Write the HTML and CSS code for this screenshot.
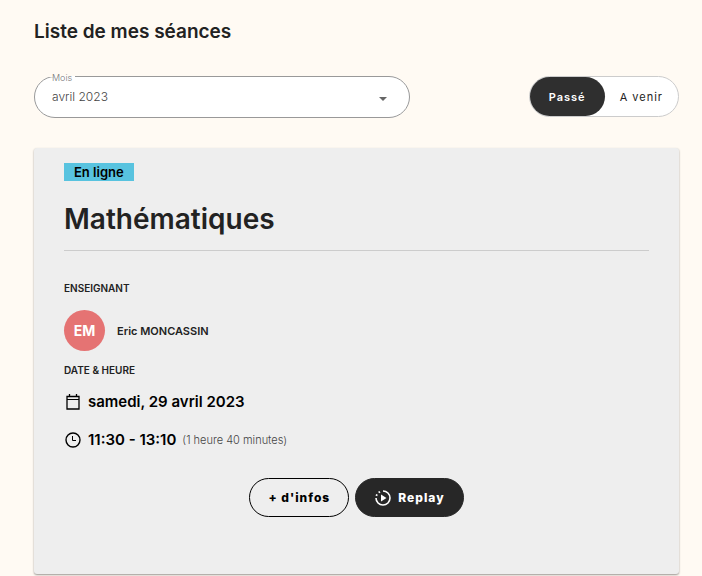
FILE: index.html
```
<!DOCTYPE html>
<html lang="fr">
<head>
    <meta charset="UTF-8">
    <meta name="viewport" content="width=device-width, initial-scale=1.0">
    <title>Liste de mes séances</title>
    <link rel="stylesheet" href="styles.css">
</head>
<body>
    <main>
        <h1>Liste de mes séances</h1>

        <!-- Filtres -->
        <div class="filters">
            <fieldset class="month">
                <legend><label for="month">Mois</label></legend>
                <select id="month">
                    <option>avril 2023</option>
                    <option>mars 2023</option>
                </select>
                <svg class="caret" viewBox="0 0 8 4" aria-hidden="true"><path d="M0 0h8L4 4z"/></svg>
            </fieldset>
            <div class="toggle">
                <button type="button" class="toggle-item active" aria-pressed="true">Passé</button>
                <button type="button" class="toggle-item" aria-pressed="false">A venir</button>
            </div>
        </div>

        <!-- Séance -->
        <article class="card">
            <span class="badge">En ligne</span>
            <h2>Mathématiques</h2>

            <h3>ENSEIGNANT</h3>
            <div class="teacher">
                <span class="avatar">EM</span>
                <span class="teacher-name">Eric MONCASSIN</span>
            </div>

            <h3>DATE &amp; HEURE</h3>
            <div class="info">
                <svg class="icon" viewBox="0 0 18 18" aria-hidden="true">
                    <path d="M3 3.500h12v12.500H3zM5.500 1v2.500M12.500 1v2.500" fill="none" stroke="currentColor" stroke-width="1.300"/>
                    <path d="M3 6.500h12" stroke="currentColor"/>
                </svg>
                <span>samedi, 29 avril 2023</span>
            </div>
            <div class="info">
                <svg class="icon" viewBox="0 0 18 18" aria-hidden="true">
                    <path d="M8.500 5v4.500H12" fill="none" stroke="currentColor"/>
                    <circle cx="9" cy="9" r="7" fill="none" stroke="currentColor" stroke-width="1.400"/>
                </svg>
                <span>11:30 - 13:10</span>
                <span class="duration">(1 heure 40 minutes)</span>
            </div>

            <div class="actions">
                <button type="button" class="button">+ d'infos</button>
                <button type="button" class="button dark">
                    <svg class="icon" viewBox="0 0 18 18" aria-hidden="true">
                        <path d="M9 2a7 7 0 1 1-7 7" fill="none" stroke="currentColor" stroke-width="1.600"/>
                        <path d="M2.300 6.800 3 5.300M4.600 3.600 6 2.700" fill="none" stroke="currentColor" stroke-width="1.800"/>
                        <path d="M7 5.500v7L12.500 9z" fill="currentColor"/>
                    </svg>
                    Replay
                </button>
            </div>
        </article>
    </main>
</body>
</html>
```

FILE: styles.css
```
* {
    box-sizing: border-box;
}

body {
    margin: 0;
    background-color: #fffaf3;
    color: #222;
    font-family: Inter, "Open Sans", sans-serif;
}

main {
    padding: 20px 23px 2px 34px;
}

h1 {
    margin: 0 0 32px;
    font-size: 19px;
    line-height: 24px;
    font-weight: 600;
}

button,
select {
    font-family: inherit;
    cursor: pointer;
}

/* Filtres */
.filters {
    display: grid;
    grid-template-columns: 7fr 5fr;
    align-items: start;
    margin-bottom: 30px;
}

.month {
    position: relative;
    height: 42px;
    min-width: 0;
    margin: 0;
    padding: 0 17px;
    border: 1px solid #999;
    border-radius: 21px;
    background-color: white;
}

.month legend {
    height: 1px;
    margin-left: -3px;
    padding: 0 3px;
    font-size: 9px;
    line-height: 3px;
    font-weight: 300;
    color: #777;
}

.month select {
    width: 100%;
    height: 38px;
    padding: 0;
    border: none;
    background: none;
    appearance: none;
    color: #444;
    font-size: 12px;
    font-weight: 300;
}

.caret {
    position: absolute;
    top: 20px;
    right: 22px;
    width: 8px;
    height: 4px;
    fill: #666;
    pointer-events: none;
}

.toggle {
    display: flex;
    justify-self: end;
    border: 1px solid #ccc;
    border-radius: 21px;
    background-color: white;
}

.toggle-item {
    height: 39px;
    padding: 0 15px;
    border: none;
    border-radius: 20px;
    background: none;
    color: #222;
    font-size: 11px;
    letter-spacing: 1px;
}

.toggle-item.active {
    padding: 0 19px;
    background-color: #2f2f2f;
    color: white;
    font-weight: 600;
}

/* Carte de la séance */
.card {
    padding: 15px 30px 57px;
    border-radius: 3px;
    background-color: #eee;
    box-shadow: 0 1px 2px rgba(0, 0, 0, 0.4);
}

.badge {
    display: block;
    width: fit-content;
    padding: 0 10px;
    background-color: #58c3df;
    color: black;
    font-size: 13px;
    line-height: 18px;
    font-weight: 600;
}

h2 {
    margin: 20px 0 31px;
    padding-bottom: 13px;
    border-bottom: 1px solid #ccc;
    font-size: 28px;
    line-height: 36px;
    font-weight: 600;
}

h3 {
    margin: 0;
    font-size: 10px;
    line-height: 12px;
    font-weight: 600;
}

.teacher {
    display: flex;
    align-items: center;
    gap: 12px;
    margin: 16px 0 13px;
}

.avatar {
    width: 41px;
    height: 41px;
    border-radius: 50%;
    background-color: #e57373;
    color: white;
    font-size: 14px;
    line-height: 41px;
    font-weight: 700;
    text-align: center;
}

.teacher-name {
    font-size: 11px;
    font-weight: 600;
}

.info {
    display: flex;
    align-items: center;
    gap: 6px;
    margin-top: 14px;
    color: black;
    font-size: 15px;
    line-height: 24px;
    font-weight: 600;
}

.icon {
    width: 18px;
    height: 18px;
}

.duration {
    color: #444;
    font-size: 11px;
    font-weight: 300;
}

.actions {
    display: flex;
    justify-content: center;
    gap: 6px;
    margin-top: 26px;
}

.button {
    display: flex;
    align-items: center;
    gap: 6px;
    height: 39px;
    padding: 0 18px;
    border: 1px solid black;
    border-radius: 20px;
    background: none;
    color: black;
    font-size: 12px;
    font-weight: 800;
    letter-spacing: 1px;
}

.button.dark {
    border-color: #272727;
    background-color: #272727;
    color: white;
}
```
